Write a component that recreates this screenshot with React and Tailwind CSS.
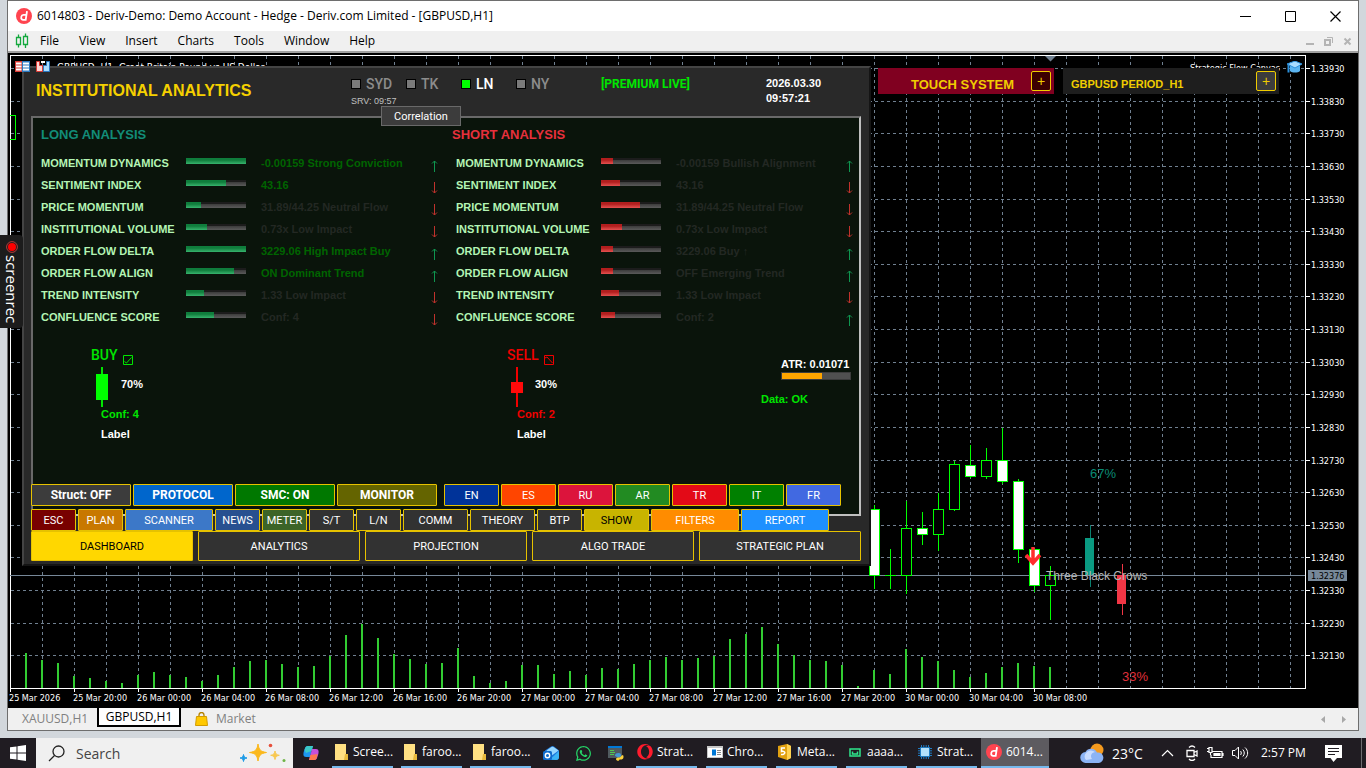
import { useState } from 'react';
import { FaWhatsapp, FaOpera } from 'react-icons/fa';

const GRID_X = Array.from({ length: 40 }, (_, i) => 42 + i * 32);
const GRID_Y = Array.from({ length: 19 }, (_, i) => Math.round(68 + i * 32.63));

const timeLabels = [
  '25 Mar 2026', '25 Mar 20:00', '26 Mar 00:00', '26 Mar 04:00', '26 Mar 08:00', '26 Mar 12:00',
  '26 Mar 16:00', '26 Mar 20:00', '27 Mar 00:00', '27 Mar 04:00', '27 Mar 08:00', '27 Mar 12:00',
  '27 Mar 16:00', '27 Mar 20:00', '30 Mar 00:00', '30 Mar 04:00', '30 Mar 08:00',
];

const volumes = [
  35, 28, 25, 12, 10, 7, 5, 13, 16, 13, 11, 7, 13, 21, 27, 28, 24, 21, 22, 32, 53, 64, 50, 34, 29, 24,
  25, 40, 12, 5, 7, 23, 23, 14, 17, 13, 20, 19, 24, 28, 31, 28, 30, 32, 49, 54, 61, 44, 33, 28, 27, 23,
  2, 18, 14, 39, 31, 27, 18, 11, 15, 21, 25, 22, 21,
];

// x, high, low, body top, body bottom, bearish
const candles = [
  [874, 505, 589, 509, 575, true],
  [890, 549, 589, 575, 575, false],
  [906, 501, 594, 528, 575, false],
  [922, 512, 545, 528, 534, true],
  [938, 493, 551, 509, 534, false],
  [954, 461, 511, 464, 509, false],
  [970, 445, 478, 465, 476, true],
  [986, 448, 479, 460, 476, false],
  [1002, 428, 484, 460, 481, true],
  [1018, 479, 563, 481, 549, true],
  [1034, 549, 592, 549, 585, true],
  [1050, 566, 620, 575, 585, false],
];

const longRows = [
  { name: 'MOMENTUM DYNAMICS', bar: 60, value: '-0.00159 Strong Conviction', on: true, up: true },
  { name: 'SENTIMENT INDEX', bar: 40, value: '43.16', on: true, up: false },
  { name: 'PRICE MOMENTUM', bar: 15, value: '31.89/44.25 Neutral Flow', on: false, up: false },
  { name: 'INSTITUTIONAL VOLUME', bar: 21, value: '0.73x Low Impact', on: false, up: false },
  { name: 'ORDER FLOW DELTA', bar: 60, value: '3229.06 High Impact Buy', on: true, up: true },
  { name: 'ORDER FLOW ALIGN', bar: 48, value: 'ON Dominant Trend', on: true, up: true },
  { name: 'TREND INTENSITY', bar: 18, value: '1.33 Low Impact', on: false, up: false },
  { name: 'CONFLUENCE SCORE', bar: 28, value: 'Conf: 4', on: false, up: false },
];

const shortRows = [
  { name: 'MOMENTUM DYNAMICS', bar: 12, value: '-0.00159 Bullish Alignment', up: true },
  { name: 'SENTIMENT INDEX', bar: 19, value: '43.16', up: false },
  { name: 'PRICE MOMENTUM', bar: 39, value: '31.89/44.25 Neutral Flow', up: false },
  { name: 'INSTITUTIONAL VOLUME', bar: 21, value: '0.73x Low Impact', up: false },
  { name: 'ORDER FLOW DELTA', bar: 12, value: '3229.06 Buy ↑', up: true },
  { name: 'ORDER FLOW ALIGN', bar: 12, value: 'OFF Emerging Trend', up: true },
  { name: 'TREND INTENSITY', bar: 18, value: '1.33 Low Impact', up: false },
  { name: 'CONFLUENCE SCORE', bar: 14, value: 'Conf: 2', up: true },
];

const sessions = [
  { name: 'SYD', on: false },
  { name: 'TK', on: false },
  { name: 'LN', on: true },
  { name: 'NY', on: false },
];

const modeButtons = [
  { label: 'Struct: OFF', cls: 'bg-[#3c3c3c]' },
  { label: 'PROTOCOL', cls: 'bg-[#0066cc]' },
  { label: 'SMC: ON', cls: 'bg-[#007800]' },
  { label: 'MONITOR', cls: 'bg-[#646400]' },
];

const langButtons = [
  { label: 'EN', cls: 'bg-[#003399]' },
  { label: 'ES', cls: 'bg-[#ff4500]' },
  { label: 'RU', cls: 'bg-[#dc143c]' },
  { label: 'AR', cls: 'bg-[#228b22]' },
  { label: 'TR', cls: 'bg-[#e30a17]' },
  { label: 'IT', cls: 'bg-[#008000]' },
  { label: 'FR', cls: 'bg-[#4169e1]' },
];

const toolButtons = [
  { label: 'ESC', cls: 'w-[45px] bg-[#780000] text-white' },
  { label: 'PLAN', cls: 'w-[45px] bg-[#c87800] text-white' },
  { label: 'SCANNER', cls: 'w-[88px] bg-[#3c78c8] text-white' },
  { label: 'NEWS', cls: 'w-[45px] bg-[#285090] text-white' },
  { label: 'METER', cls: 'w-[45px] bg-[#3c6428] text-white' },
  { label: 'S/T', cls: 'w-[45px] bg-[#323232] text-white' },
  { label: 'L/N', cls: 'w-[45px] bg-[#323232] text-white' },
  { label: 'COMM', cls: 'w-[65px] bg-[#323232] text-white' },
  { label: 'THEORY', cls: 'w-[65px] bg-[#323232] text-white' },
  { label: 'BTP', cls: 'w-[45px] bg-[#323232] text-white' },
  { label: 'SHOW', cls: 'w-[65px] bg-[#c8b400] text-black' },
  { label: 'FILTERS', cls: 'w-[88px] bg-[#ff8c00] text-white' },
  { label: 'REPORT', cls: 'w-[88px] bg-[#1e90ff] text-white' },
];

const pages = ['DASHBOARD', 'ANALYTICS', 'PROJECTION', 'ALGO TRADE', 'STRATEGIC PLAN'];

function DerivLogo({ className }) {
  return (
    <svg viewBox="0 0 16 16" className={className}>
      <circle cx="8" cy="8" r="8" fill="#ff444f" />
      <path d="M11 3.2 9.7 11.8H7.2a2 2 0 0 1-2-2.4l.1-.6A2.4 2.4 0 0 1 7.6 6.8h2.6" fill="none" stroke="#fff" strokeWidth="1.8" />
    </svg>
  );
}

function TitleBar() {
  return (
    <header className="flex h-[30px] items-center bg-white pl-2 text-[12px] text-black">
      <DerivLogo className="size-4" />
      <h1 className="ml-[5px]">6014803 - Deriv-Demo: Demo Account - Hedge - Deriv.com Limited - [GBPUSD,H1]</h1>
      <div className="ml-auto flex">
        <button aria-label="Minimize" className="flex h-[30px] w-[45px] items-center justify-center">
          <svg width="11" height="11" fill="none" stroke="#000"><path d="M0 5.5h11" /></svg>
        </button>
        <button aria-label="Maximize" className="flex h-[30px] w-[45px] items-center justify-center">
          <svg width="11" height="11" fill="none" stroke="#000"><path d="M.5.5h10v10H.5z" /></svg>
        </button>
        <button aria-label="Close" className="flex h-[30px] w-[45px] items-center justify-center">
          <svg width="11" height="11" fill="none" stroke="#000" strokeWidth="1.2"><path d="m.5.5 10 10M10.500.5l-10 10" /></svg>
        </button>
      </div>
    </header>
  );
}

function MenuBar() {
  const items = ['File', 'View', 'Insert', 'Charts', 'Tools', 'Window', 'Help'];
  return (
    <nav className="flex h-5 items-center bg-[#f0f0f0] pl-[7px] text-[12px] text-black">
      <svg width="14" height="16" fill="none" stroke="#12a83c" strokeWidth="1.3">
        <path d="M1.500 4.500h4v7h-4zM3.500 1.500v3M3.500 11.500v3M8.500 3.500h4v8h-4zM10.500.5v3M10.500 11.500v3.500" />
      </svg>
      <div className="flex gap-5 pl-[11px]">
        {items.map(item => (
          <button key={item}>{item}</button>
        ))}
      </div>
      <div className="ml-auto flex items-center gap-[10px] pr-1.5 text-[#b4b4b4]">
        <button aria-label="Minimize chart">
          <svg width="9" height="9" fill="none" stroke="currentColor" strokeWidth="2"><path d="M1 7h8" /></svg>
        </button>
        <button aria-label="Restore chart">
          <svg width="9" height="9" fill="none" stroke="currentColor"><path d="M3 .5h5.500V6" /><path d="M1 3h5v5H1z" strokeWidth="2" /></svg>
        </button>
        <button aria-label="Close chart">
          <svg width="9" height="9" fill="none" stroke="currentColor" strokeWidth="2"><path d="m1.500 1.500 6 6M7.500 1.500l-6 6" /></svg>
        </button>
      </div>
    </nav>
  );
}

function Chart() {
  return (
    <svg viewBox="8 53 1350 655" preserveAspectRatio="xMinYMin meet" className="block h-full w-full bg-black font-['DejaVu_Sans_Condensed','DejaVu_Sans',sans-serif]">
      <g stroke="#708090" strokeDasharray="3 3" shapeRendering="crispEdges">
        {GRID_X.map(x => <path key={x} d={`M${x}.5 56V688`} />)}
        {GRID_Y.map(y => <path key={y} d={`M11 ${y}.5H1305`} />)}
      </g>

      {/* Header texts, partly under the panels */}
      <text x="57" y="71" fontSize="10" fill="#fff">GBPUSD, H1:  Great Britain Pound vs US Dollar</text>
      <text x="1190" y="71" fontSize="9" fill="#fff">Strategic Flow Canvas</text>
      <path d="M1045 56h11l-5.500 5.500z" fill="#708090" />

      {/* Frame and axes */}
      <path d="M10.500 688V55.500H1305.500V688.500H10" fill="none" stroke="#fff" shapeRendering="crispEdges" />
      {GRID_Y.map((y, i) => (
        <g key={y}>
          <path d={`M1305 ${y}.5h5`} stroke="#fff" shapeRendering="crispEdges" />
          <text x="1311" y={y + 4} fontSize="9" fill="#fff">{(1.3393 - i * 0.001).toFixed(5)}</text>
        </g>
      ))}
      {timeLabels.map((t, i) => (
        <g key={t}>
          <path d={`M${10 + i * 64}.5 688v4`} stroke="#fff" shapeRendering="crispEdges" />
          <text x={9 + i * 64} y="701" fontSize="9" fill="#fff">{t}</text>
        </g>
      ))}

      {/* Volumes */}
      {volumes.map((h, i) => (
        <rect key={i} x={25 + i * 16} y={688 - h} width="2" height={h} fill="#32cd32" />
      ))}

      {/* Last price */}
      <path d="M10 575.500H1305" stroke="#778899" shapeRendering="crispEdges" />
      <rect x="1308" y="570" width="39" height="11" fill="#778899" />
      <text x="1311" y="579" fontSize="9" fill="#000">1.32376</text>

      {/* Candles */}
      <path d="M10 115.500h5.500v24H10" fill="none" stroke="#0f0" shapeRendering="crispEdges" />
      {candles.map(([x, high, low, top, bottom, bear]) => (
        <g key={x} stroke="#0f0" shapeRendering="crispEdges">
          <path d={`M${x}.5 ${high}V${top}M${x}.5 ${bottom}V${low}`} />
          {top === bottom
            ? <path d={`M${x - 5} ${top}.5h11`} />
            : <rect x={x - 4.5} y={top + 0.5} width="10" height={bottom - top} fill={bear ? '#fff' : '#000'} />}
        </g>
      ))}

      {/* Forecast candles */}
      <path d="M1090.500 525v62" stroke="#0a8070" />
      <rect x="1085" y="538" width="9" height="37" fill="#0a9a82" />
      <path d="M1122.500 564v51" stroke="#f23645" />
      <rect x="1117" y="575" width="9" height="29" fill="#f23645" />
      <path d="M1033 547v15M1026 555l7 8 7-8" fill="none" stroke="#ff2d2d" strokeWidth="3.500" />
      <g className="font-['Liberation_Sans',Arial,sans-serif]">
        <text x="1090" y="478" fontSize="13" fill="#0a8a74">67%</text>
        <text x="1122" y="681" fontSize="13" fill="#e0303c">33%</text>
        <text x="1046" y="580" fontSize="12" fill="#b4b4b4">Three Black Crows</text>
      </g>
    </svg>
  );
}

function TrendArrow({ up }) {
  return up ? (
    <svg width="7" height="12" fill="none" stroke="#0f9650"><path d="M3.500 1v11M1 3.500 3.500 1 6 3.500" /></svg>
  ) : (
    <svg width="7" height="12" fill="none" stroke="#c0322c"><path d="M3.500 0v11M1 8.500 3.500 11 6 8.500" /></svg>
  );
}

function Rows({ rows, red }) {
  return (
    <ul className="pl-2 text-[11px] font-bold">
      {rows.map(row => (
        <li key={row.name} className="flex h-[22px] items-center">
          <span className="w-[145px] text-[#b4f5b4]">{row.name}</span>
          <span className="mb-1 mr-[15px] block h-1.5 w-[60px] bg-linear-to-b from-[#1c1c1c] from-35% via-[#3c3c3c] via-35% to-[#5a5a5a]">
            <span
              className={`block h-full bg-linear-to-b ${red ? 'from-[#b21e1e] from-35% to-[#e65050]' : 'from-[#0f7d3c] from-35% to-[#37b46e]'}`}
              style={{ width: row.bar }}
            />
          </span>
          <span className={`w-[170px] ${row.on ? 'text-[#006400]' : 'text-[#232823]'}`}>{row.value}</span>
          <span className="pt-1.5"><TrendArrow up={row.up} /></span>
        </li>
      ))}
    </ul>
  );
}

function SignalBlock({ buy }) {
  return (
    <div className={`w-[416px] pl-[58px] text-[11px] font-bold ${buy ? 'text-[#00e600]' : 'text-[#f00000]'}`}>
      <div className="flex h-5 items-center gap-[5px]">
        <span className="pt-px font-['Roboto',sans-serif] text-[14px] font-medium">{buy ? 'BUY' : 'SELL'}</span>
        <svg width="10" height="10" fill="none" stroke="currentColor" className="mt-[10px]">
          <path d="M.5.5h9v9h-9z" />
          {buy ? <path d="m1.500 6.500 2 1.500 5-5.500" /> : <path d="m1 3 2-1 5.500 6" />}
        </svg>
      </div>
      <div className={`mt-0.5 flex h-10 items-start ${buy ? 'gap-[13px] pl-[5px]' : 'gap-3 pl-1'}`}>
        <svg width="12" height="40" fill="currentColor">
          <path d="M5 0h2v40H5z" />
          {buy ? <path d="M0 7h12v26H0z" fill="#0f0" /> : <path d="M0 15h12v11H0z" fill="#ff0a0a" />}
        </svg>
        <span className="leading-[34px] text-white">{buy ? '70%' : '30%'}</span>
      </div>
      <div className="pl-[10px] leading-[14px]">
        <p>{buy ? 'Conf: 4' : 'Conf: 2'}</p>
        <p className="mt-1.5 text-white">Label</p>
      </div>
    </div>
  );
}

function AnalyticsPanel() {
  const [page, setPage] = useState('DASHBOARD');

  return (
    <section className="absolute left-[14px] top-[13px] w-[849px] border-2 border-b-[#141414] border-l-[#444] border-r-[#141414] border-t-[#444] bg-[#292929] pb-[3px] pl-[7px] pr-2 font-['Liberation_Sans',Arial,sans-serif]">
      <div className="flex h-12 items-start pl-[5px]">
        <h2 className="w-[315px] pt-[11px] text-[16px] font-bold leading-6 text-[#f5d000]">INSTITUTIONAL ANALYTICS</h2>
        <div className="w-[250px] pt-[7px]">
          <div className="flex h-[18px] items-center">
            {sessions.map(s => (
              <span key={s.name} className={`flex w-[55px] items-center gap-[5px] font-['Roboto',sans-serif] text-[14px] font-medium ${s.on ? 'text-white' : 'text-[#8c8c8c]'}`}>
                <i className={`block size-[10px] border border-black ${s.on ? 'bg-[#0f0]' : 'bg-[#7a7a7a]'}`} />
                {s.name}
              </span>
            ))}
          </div>
          <p className="text-[9px] leading-4 text-[#c0c0c0]">SRV: 09:57</p>
        </div>
        <p className="w-[165px] pt-[7px] font-['Roboto',sans-serif] text-[12px] font-bold leading-[18px] text-[#00e600]">[PREMIUM LIVE]</p>
        <p className="w-[60px] pt-2 text-[11px] font-bold leading-[15px] text-white">2026.03.30 09:57:21</p>
      </div>

      <div className="h-[400px] border-2 border-b-[#c0c0c0] border-l-[#696969] border-r-[#c0c0c0] border-t-[#696969] bg-[#0a140b]">
        <div className="grid grid-cols-[411px_1fr] pl-2 pt-[9px] text-[13px] font-bold leading-4">
          <h3 className="text-[#128c78]">LONG ANALYSIS</h3>
          <h3 className="text-[#e6303c]">SHORT ANALYSIS</h3>
        </div>
        <div className="mt-[9px] grid grid-cols-[415px_1fr]">
          <Rows rows={longRows} />
          <Rows rows={shortRows} red />
        </div>
        <div className="mt-[17px] flex items-start">
          <SignalBlock buy />
          <SignalBlock />
          <div className="-ml-[104px] pt-[11px] text-[11px] font-bold leading-4">
            <p className="whitespace-nowrap pl-5 text-white">ATR: 0.01071</p>
            <div className="ml-5 h-2 w-[70px] border border-[#3c3c3c] bg-[#505050]">
              <div className="h-full w-[40px] bg-[#ffa500]" />
            </div>
            <p className="mt-[11px] text-[#00e600]">Data: OK</p>
          </div>
        </div>
      </div>

      <div className="relative -mt-8 font-['Roboto',sans-serif] text-[11px] text-white">
        <div className="flex h-[22px] gap-[2px]">
          {modeButtons.map(b => (
            <button key={b.label} className={`w-[100px] rounded-[1px] border border-[#e6c200] text-[12px] font-bold ${b.cls}`}>{b.label}</button>
          ))}
          <div className="ml-[5px] flex gap-[2px]">
            {langButtons.map(b => (
              <button key={b.label} className={`w-[55px] rounded-[1px] border border-[#e6c200] pt-0.5 ${b.cls}`}>{b.label}</button>
            ))}
          </div>
        </div>
        <div className="mt-[3px] flex h-[22px] gap-[2px]">
          {toolButtons.map(b => (
            <button key={b.label} className={`rounded-[1px] border border-[#e6c200] pt-0.5 ${b.cls}`}>{b.label}</button>
          ))}
        </div>
        <div className="grid h-[30px] grid-cols-5 gap-[5px]">
          {pages.map(p => (
            <button
              key={p}
              onClick={() => setPage(p)}
              className={`rounded-[1px] border border-[#e6c200] pt-0.5 ${page === p ? 'bg-[#ffd700] text-black' : 'bg-[#323232] text-white'}`}
            >
              {p}
            </button>
          ))}
        </div>
      </div>

      <button className="absolute left-[357px] top-[38px] h-5 w-20 border border-[#696969] bg-[#3c3c3c] pt-0.5 font-['Roboto',sans-serif] text-[11px] leading-4 text-white">Correlation</button>
    </section>
  );
}

function ChartBadges() {
  return (
    <>
      <svg width="36" height="11" className="absolute left-[7px] top-2">
        <path d="M0 0h7v11H0z" fill="#d83a34" />
        <path d="M7 0h8v11H7z" fill="#2a78c0" />
        <path d="M1 1.500h5.500v2H1zM1 4.500h5.500v2H1zM1 7.500h5.500v2H1zM8 1.500h6v2H8zM8 4.500h6v2H8zM8 7.500h6v2H8z" fill="#fff" />
        <path d="M21.500 .5h3v4h3v6h-6z" fill="#ffd8d4" stroke="#d83a34" />
        <path d="M34.500 .5h-3v4h-3v6h6z" fill="#a8dcff" stroke="#2a78c0" />
        <path d="M26 0h4v2h-4z" fill="#fff" />
      </svg>

      <div className="absolute left-[870px] top-[15px] flex gap-[9px] font-['Liberation_Sans',Arial,sans-serif] font-bold text-[#f0cc00]">
        <div className="flex h-[26px] w-[176px] items-center justify-between bg-[#800020] pl-[33px] pr-[3px]">
          <span className="pt-[7px] text-[13px]">TOUCH SYSTEM</span>
          <button aria-label="Expand touch system" className="size-5 rounded-[2px] border border-[#f0cc00] bg-[#3c0000] text-[14px] font-normal leading-none">+</button>
        </div>
        <div className="flex h-[26px] w-[216px] items-center justify-between bg-[#1e1e1e] pl-2 pr-[3px]">
          <span className="pt-1.5 text-[11px]">GBPUSD PERIOD_H1</span>
          <button aria-label="Expand period" className="size-5 rounded-[2px] border border-[#f0cc00] bg-[#3c3c3c] text-[14px] font-normal leading-none">+</button>
        </div>
      </div>

      <svg width="15" height="12" className="absolute left-[1279px] top-2">
        <path d="M3 5v5c2 2 8 2 10 0V4z" fill="#5ab4f0" />
        <path d="m0 3 8-3 7 3-7 4z" fill="#a8dcff" stroke="#2a90dc" />
        <path d="M1.500 3.500v8" stroke="#2a90dc" strokeWidth="2" />
      </svg>
    </>
  );
}

function SymbolTabs() {
  return (
    <div className="flex h-[22px] items-start bg-[#f0f0f0] text-[12px] text-[#808080]">
      <button className="h-[22px] w-[89px] whitespace-nowrap pl-[14px] text-left">XAUUSD,H1</button>
      <button className="h-[19px] w-[84px] border-2 border-t-0 border-black bg-white leading-4 text-black">GBPUSD,H1</button>
      <button className="flex h-[22px] items-center gap-2 pl-[14px]">
        <svg width="13" height="14" viewBox="0 0 13 14">
          <path d="M4 6V3a2.500 2.500 0 0 1 5 0v3" fill="none" stroke="#b48200" strokeWidth="1.300" />
          <path d="M1.500 4.500h10l1 9H.5z" fill="#ffc800" stroke="#d29b00" />
        </svg>
        Market
      </button>
      <div className="ml-auto flex h-[22px] items-center gap-[17px] pr-3 text-[#a8a8a8]">
        <svg width="4" height="7" fill="currentColor"><path d="M4 0v7L0 3.500z" /></svg>
        <svg width="4" height="7" fill="currentColor"><path d="M0 0v7l4-3.500z" /></svg>
      </div>
    </div>
  );
}

function FolderIcon() {
  return (
    <svg width="14" height="16">
      <path d="M1 0h11v16H1z" fill="#ffe083" />
      <path d="M11 10h3v6h-4z" fill="#e8b93c" />
    </svg>
  );
}

function OperaIcon() {
  return <FaOpera className="size-4 text-[#ff1b2d]" />;
}

function ChromeAppIcon() {
  return (
    <svg width="16" height="12">
      <path d="M0 0h16v12H0z" fill="#c8c8c8" />
      <path d="M1 2h14v9H1z" fill="#fff" />
      <path d="M5 3.500h4v6H5z" fill="#0078d7" />
      <path d="M10 4.500h4M10 6.500h4M10 8.500h4" stroke="#888" />
    </svg>
  );
}

function MetaEditorIcon() {
  return (
    <svg width="14" height="16">
      <path d="m0 2 9-2 4 2v12l-4 2-9-3z" fill="#e0a010" />
      <path d="m9 0 4 2v12l-4 2z" fill="#ffd250" />
      <path d="M7 4H3.500v3.500C8 6.500 8 11 3 10.500" fill="none" stroke="#fff" strokeWidth="1.500" />
    </svg>
  );
}

function CalcIcon() {
  return (
    <svg width="12" height="9" fill="none" stroke="#2ee68c" strokeWidth="1.500">
      <path d="M1 1h10v7H1zM3.500 3.500v2.500h5V3.500" />
    </svg>
  );
}

function ChipIcon() {
  return (
    <svg width="14" height="14">
      <path d="M3.500 0v14M5.800 0v14M8.200 0v14M10.500 0v14M0 3.500h14M0 5.800h14M0 8.200h14M0 10.500h14" stroke="#1f7ac0" />
      <path d="M2.500 2.500h9v9h-9z" fill="#b4e1fa" stroke="#1f7ac0" />
    </svg>
  );
}

function TaskItem({ icon, label, active }) {
  return (
    <button className={`flex h-full items-center gap-1 border-b-2 border-[#76b9ed] ${active ? 'w-[68px] bg-[#5d5b60] pl-[5px]' : 'w-[61px] pl-px'}`}>
      <span className="flex w-4 shrink-0 justify-center">{icon}</span>
      {label}
    </button>
  );
}

function Taskbar() {
  return (
    <footer className="flex h-[30px] shrink-0 items-center bg-[#201c22] text-[12px] text-white">
      <button aria-label="Start" className="flex h-full w-9 items-center justify-center">
        <svg width="16" height="16" fill="#fff"><path d="m0 2.300 6.500-.9v6.100H0zM7.500 1.200 16 0v7.500H7.500zM0 8.500h6.500v6.100L0 13.700zM7.500 8.500H16V16l-8.500-1.200z" /></svg>
      </button>
      <label className="flex h-full w-[257px] items-center bg-[#f0f0f0] pl-3 pr-[7px] text-[#444]">
        <svg width="17" height="17" fill="none" stroke="#222" strokeWidth="1.300"><circle cx="10.500" cy="6.500" r="5.500" /><path d="M6.500 10.500 1 16" /></svg>
        <input aria-label="Search" defaultValue="Search" className="ml-[11px] w-[140px] min-w-0 bg-transparent text-[14px] outline-none" />
        <svg width="46" height="20" className="ml-auto">
          <path d="M18 1c1 6 2.500 7.500 8.500 8.500-6 1-7.500 2.500-8.500 8.500-1-6-2.500-7.500-8.500-8.500C15.500 8.500 17 7 18 1z" fill="#fbb81c" stroke="#fbb81c" />
          <path d="M35 8c.6 3 1.300 3.700 4.300 4.300C36.300 13 35.600 13.700 35 16.500c-.6-2.800-1.300-3.500-4.300-4.200C33.700 11.700 34.400 11 35 8z" fill="#f8c850" stroke="#f8c850" />
          <path d="M3.500 11.500c.5 2.500 1 3 3.500 3.500-2.500.5-3 1-3.500 3.500C3 16 2.500 15.500 0 15c2.500-.5 3-1 3.500-3.500z" fill="#1e9be6" stroke="#1e9be6" />
          <circle cx="30.500" cy="2.500" r="1.800" fill="#e6503c" />
          <circle cx="44" cy="17.500" r="1.500" fill="#6eb446" />
        </svg>
      </label>
      <button aria-label="Copilot" className="ml-[10px] mr-[13px]">
        <svg width="16" height="16" viewBox="0 0 16 16">
          <path d="M5 1h5L7 12H3C0 12 0 9 1 6l1-3c.6-1.500 1.500-2 3-2z" fill="#1e96f0" />
          <path d="M5 1h5L8.500 6 3 8 1.500 5C2.500 2 3 1 5 1z" fill="#3cc8c8" />
          <path d="M11 15H6L9 4h4c3 0 3 3 2 6l-1 3c-.6 1.500-1.500 2-3 2z" fill="#c850dc" />
          <path d="M11 15H6l1.500-5 7-1-.8 4c-.6 1.500-1.200 2-2.700 2z" fill="#ff7850" />
        </svg>
      </button>
      <nav className="flex h-full items-center gap-2">
        <TaskItem icon={<FolderIcon />} label="Scree..." />
        <TaskItem icon={<FolderIcon />} label="faroo..." />
        <TaskItem icon={<FolderIcon />} label="faroo..." />
      </nav>
      <div className="flex items-center gap-4 pl-3 pr-3">
        <button aria-label="Outlook">
          <svg width="16" height="16">
            <path d="M2 5.500 8 1.500q1.500-1 3 0l5 4V12q0 3-3 3H5q-3 0-3-3z" fill="#1e78dc" />
            <path d="m3.500 5.500 5-3.500q1-.7 2 0l5 3.500-6 4.500z" fill="#96d7ff" />
            <path d="m16 6-9 8.500 6 .5q3 0 3-3z" fill="#3cb4f5" />
            <rect y="6" width="9" height="9" rx="1.500" fill="#0f6ccc" />
            <circle cx="4.500" cy="10.500" r="2.200" fill="none" stroke="#fff" strokeWidth="1.400" />
          </svg>
        </button>
        <button aria-label="WhatsApp"><FaWhatsapp className="size-[17px] text-[#25d366]" /></button>
        <button aria-label="Python editor">
          <svg width="16" height="16">
            <path d="M0 1h14v12H0z" fill="#505a5f" />
            <path d="M0 1h14v2H0z" fill="#0078d7" />
            <path d="M2 5.500h4M2 7.500h5M2 9.500h4" stroke="#50c850" />
            <path d="M7 11c0-2 1-3 3.500-3S13 9 13 10.500 12 12 10 12.500z" fill="#4696d2" />
            <path d="M15 10c1.500 3-.5 4.500-2.500 4.500h-1c-.5 2.500-3.500 1-3.500-.5 0-1.500 2-1.500 3.500-1.500s1.500-2.500 3.500-2.500z" fill="#ffd23c" />
          </svg>
        </button>
      </div>
      <nav className="flex h-full items-center gap-[9px]">
        <TaskItem icon={<OperaIcon />} label="Strat..." />
        <TaskItem icon={<ChromeAppIcon />} label="Chro..." />
        <TaskItem icon={<MetaEditorIcon />} label="Meta..." />
        <TaskItem icon={<CalcIcon />} label="aaaa..." />
        <TaskItem icon={<ChipIcon />} label="Strat..." />
      </nav>
      <div className="ml-1 h-full">
        <TaskItem icon={<DerivLogo className="size-4" />} label="6014..." active />
      </div>

      <div className="ml-auto flex h-full items-center pr-1">
        <svg width="25" height="20">
          <circle cx="17" cy="7" r="6.500" fill="#f59a1e" />
          <path d="M6 20a5.500 5.500 0 0 1-.5-11A6.500 6.500 0 0 1 17 9.500 5.300 5.300 0 0 1 19 20z" fill="#8cb4f5" />
          <path d="M6 17a5 5 0 0 1 0-7A6 6 0 0 1 15 9c-4 1-5 4-3 7z" fill="#c8dcff" />
        </svg>
        <span className="ml-[7px] w-[49px] text-[14px]">23°C</span>
        <svg width="13" height="8" fill="none" stroke="#fff" strokeWidth="1.200"><path d="m1 7 5.500-5.500L12 7" /></svg>
        <svg width="12" height="16" fill="none" stroke="#fff" strokeWidth="1.300" className="ml-3">
          <path d="M1 5.500h7v6H1zM8 7.500l3-1.500v5L8 9.500M3 2.500c2-2 4-2 6 0M3 14c2 2 4 2 6 0" />
        </svg>
        <svg width="17" height="12" fill="none" stroke="#fff" strokeWidth="1.200" className="ml-[9px]">
          <path d="M5 4.500h10v6H4V8M16 6v3" />
          <path d="M7 6.500h6v2H7z" fill="#fff" />
          <path d="M0 1.500h1.500M0 4.500h1.500M2 .5h3v5H2zM3.500 5v3" />
        </svg>
        <svg width="17" height="14" fill="none" stroke="#fff" className="ml-2">
          <path d="M.5 4.500H3l3.500-3.500v12L3 9.500H.5zM8.500 5c1 1 1 3 0 4M10.800 3.500c2 2 2 5 0 7M13 1.500c3.500 3 3.500 8 0 11" />
        </svg>
        <span className="ml-3 w-[64px] whitespace-nowrap">2:57 PM</span>
        <svg width="17" height="17" className="mr-[19px]">
          <path d="M0 0h17v13h-5l-3.500 4-3-4H0z" fill="#fff" />
          <path d="M3 3.500h11M3 6.500h11M3 9.500h7" stroke="#201c22" />
        </svg>
        <span className="h-full border-l border-[#6e6c70]" />
      </div>
    </footer>
  );
}

export default function App() {
  return (
    <div className="relative flex h-screen min-h-[768px] flex-col bg-[#d2d7dc] font-['Open_Sans','Noto_Sans',sans-serif]">
      <main className="flex min-h-0 flex-1 flex-col px-[7px] pb-[7px]">
        <div className="flex min-h-0 flex-1 flex-col border border-[#6e6e6e]">
          <TitleBar />
          <MenuBar />
          <div className="relative min-h-0 flex-1 overflow-hidden border-t-2 border-[#a0a0a0] bg-black">
            <Chart />
            <AnalyticsPanel />
            <ChartBadges />
          </div>
          <SymbolTabs />
        </div>
      </main>
      <Taskbar />

      <div className="absolute left-0 top-[235px] flex h-[93px] w-[23px] flex-col items-center rounded-r bg-[#1c1c1c] pt-1.5 text-white">
        <svg width="12" height="12"><circle cx="6" cy="6" r="4" fill="#f00" /><circle cx="6" cy="6" r="5.400" fill="none" stroke="#b43c3c" /></svg>
        <span className="mt-0.5 text-[15px] font-medium leading-[22px] [writing-mode:vertical-rl]">screenrec</span>
      </div>
    </div>
  );
}
